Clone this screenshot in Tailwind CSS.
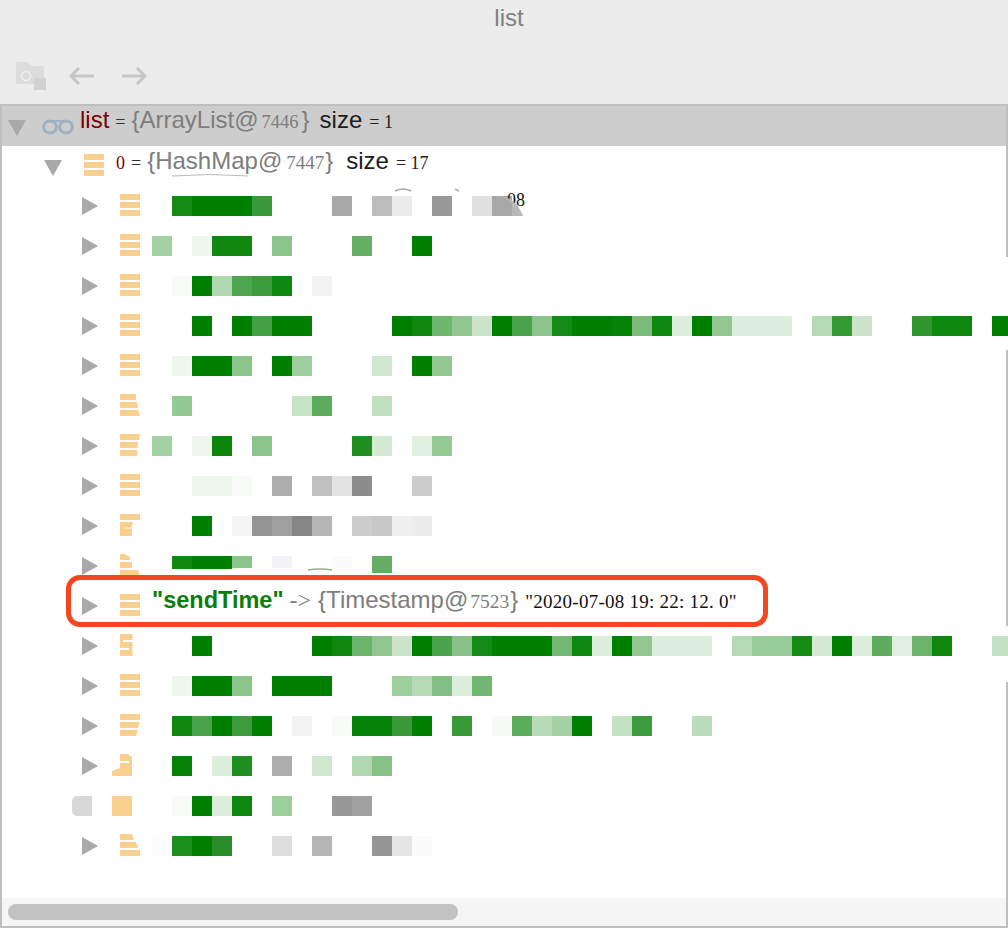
<!DOCTYPE html>
<html>
<head>
<meta charset="utf-8">
<title>list</title>
<script src="https://cdn.jsdelivr.net/npm/@tailwindcss/browser@4"></script>
</head>
<body class="bg-[#ececec]">
<div class="relative w-[1008px] h-[928px] overflow-hidden flex flex-col bg-[#ececec] font-['Liberation_Sans',sans-serif]">

    <!-- Titulo -->
    <div class="h-9 flex items-center justify-center pl-[10px] text-[24px] text-[#808080]">list</div>

    <!-- Barra de herramientas -->
    <div class="h-[68px] pt-3 pl-4 flex items-center">
        <svg class="w-[30px] h-7" viewBox="0 0 30 28">
            <path d="M0 0H11L15 4H28V16H18V22H0Z" fill="#dcdcdc"/>
            <circle cx="10" cy="14" r="4.5" fill="none" stroke="#f0f0f0" stroke-width="1.5"/>
            <rect x="18" y="16" width="12" height="12" fill="#d2d2d2"/>
        </svg>
        <svg class="ml-[22px] w-[26px] h-5" viewBox="0 0 26 20" fill="none" stroke="#c6c6c6" stroke-width="3">
            <path d="M26 10H3M11 2L3 10L11 18"/>
        </svg>
        <svg class="ml-7 w-[26px] h-5" viewBox="0 0 26 20" fill="none" stroke="#c6c6c6" stroke-width="3">
            <path d="M0 10H23M15 2L23 10L15 18"/>
        </svg>
    </div>

    <!-- Arbol de variables -->
    <div class="flex-1 flex flex-col border-l-2 border-t-2 border-b-2 border-[#bfbfbf] bg-white">
        <div class="flex-1 flex flex-col">

            <!-- list -->
            <div class="h-10 shrink-0 flex items-center bg-[#cdcdcd] pl-[6px]">
                <svg class="w-[18px] h-5" viewBox="0 0 18 20"><path d="M0 4H18L9 20Z" fill="#a9a9a9"/></svg>
                <svg class="ml-4 w-8 h-5" viewBox="0 0 32 20" fill="none" stroke="#9fb0c0" stroke-width="3">
                    <ellipse cx="8" cy="11" rx="6.500" ry="6"/><ellipse cx="24" cy="11" rx="6.500" ry="6"/><path d="M8 5H24" stroke-width="2"/>
                </svg>
                <div class="ml-[6px] pb-[10px] flex items-baseline whitespace-nowrap text-[24px] leading-7 text-[#7d7d7d]">
                    <span class="text-[#7a0000]">list</span>
                    <span class="ml-[6px] mr-[6px] text-[18px] font-['Liberation_Serif',serif] text-[#333]">=</span>
                    <span>{ArrayList@</span><span class="text-[18.500px] font-['Liberation_Serif',serif] mx-[3px]">7446</span><span>}</span>
                    <span class="ml-[10px] text-[#1c1c1c]">size</span>
                    <span class="ml-[7px] text-[18px] font-['Liberation_Serif',serif] text-[#222]">= 1</span>
                </div>
            </div>

            <!-- 0 -->
            <div class="h-10 shrink-0 flex items-center pl-[42px]">
                <svg class="w-[18px] h-5" viewBox="0 0 18 20"><path d="M0 4H18L9 20Z" fill="#a9a9a9"/></svg>
                <svg class="ml-[22px] w-5 h-6" viewBox="0 0 20 24" fill="#fad08e"><rect width="20" height="6"/><rect y="8" width="20" height="6"/><rect y="16" width="20" height="6"/></svg>
                <div class="ml-3 pb-[8px] flex items-baseline whitespace-nowrap text-[24px] leading-7 text-[#7d7d7d]">
                    <span class="text-[18px] font-['Liberation_Serif',serif] text-[#7a0000]">0</span>
                    <span class="ml-[6px] mr-[6px] text-[18px] font-['Liberation_Serif',serif] text-[#333]">=</span>
                    <span>{HashMap@</span><span class="text-[19px] font-['Liberation_Serif',serif] ml-[4px] mr-[1px]">7447</span><span>}</span>
                    <span class="ml-[13px] text-[#1c1c1c]">size</span>
                    <span class="ml-[7px] text-[18px] font-['Liberation_Serif',serif] text-[#222]">= 17</span>
                </div>
            </div>

            <!-- fila 1 -->
            <div class="h-10 shrink-0 flex items-center pl-[80px]">
                <svg class="w-4 h-5" viewBox="0 0 16 20"><path d="M0 1L16 10L0 19Z" fill="#a9a9a9"/></svg>
                <svg class="ml-[22px] w-5 h-6" viewBox="0 0 20 24" fill="#fad08e"><rect width="20" height="6"/><rect y="8" width="20" height="6"/><rect y="16" width="20" height="6"/></svg>
                <div class="ml-3 flex items-center">
                    <i class="size-5 ml-5 bg-[#148a14]"></i><i class="w-15 h-5 bg-[#008000]"></i><i class="size-5 bg-[#389a38]"></i>
                    <i class="size-5 ml-15 bg-[#a9a9a9]"></i>
                    <i class="size-5 ml-5 bg-[#bcbcbc]"></i><i class="size-5 bg-[#ececec]"></i>
                    <i class="size-5 ml-5 bg-[#999999]"></i>
                    <i class="size-5 ml-5 bg-[#e0e0e0]"></i><i class="size-5 bg-[#a8a8a8]"></i>
                    <span class="-ml-[5px] -mt-[12px] text-[18px] leading-5 font-['Liberation_Serif',serif] text-[#111]">08</span>
                </div>
            </div>

            <!-- fila 2 -->
            <div class="h-10 shrink-0 flex items-center pl-[80px]">
                <svg class="w-4 h-5" viewBox="0 0 16 20"><path d="M0 1L16 10L0 19Z" fill="#a9a9a9"/></svg>
                <svg class="ml-[22px] w-5 h-6" viewBox="0 0 20 24" fill="#fad08e"><rect width="20" height="6"/><rect y="8" width="20" height="6"/><rect y="16" width="20" height="6"/></svg>
                <div class="ml-3 flex items-center">
                    <i class="size-5 bg-[#a3d1a3]"></i>
                    <i class="size-5 ml-5 bg-[#eef6ee]"></i><i class="w-10 h-5 bg-[#108810]"></i>
                    <i class="size-5 ml-5 bg-[#8cc58c]"></i>
                    <i class="size-5 ml-15 bg-[#66b066]"></i>
                    <i class="size-5 ml-10 bg-[#008000]"></i>
                </div>
            </div>

            <!-- fila 3 -->
            <div class="h-10 shrink-0 flex items-center pl-[80px]">
                <svg class="w-4 h-5" viewBox="0 0 16 20"><path d="M0 1L16 10L0 19Z" fill="#a9a9a9"/></svg>
                <svg class="ml-[22px] w-5 h-6" viewBox="0 0 20 24" fill="#fad08e"><rect width="20" height="6"/><rect y="8" width="20" height="6"/><rect y="16" width="20" height="6"/></svg>
                <div class="ml-3 flex items-center">
                    <i class="size-5 ml-5 bg-[#f9fbf9]"></i><i class="size-5 bg-[#008000]"></i><i class="size-5 bg-[#b0d8b0]"></i><i class="size-5 bg-[#4fa54f]"></i><i class="size-5 bg-[#3c9b3c]"></i><i class="size-5 bg-[#0f880f]"></i>
                    <i class="size-5 ml-5 bg-[#f3f3f3]"></i>
                </div>
            </div>

            <!-- fila 4 -->
            <div class="h-10 shrink-0 flex items-center pl-[80px]">
                <svg class="w-4 h-5 shrink-0" viewBox="0 0 16 20"><path d="M0 1L16 10L0 19Z" fill="#a9a9a9"/></svg>
                <svg class="ml-[22px] w-5 h-6 shrink-0" viewBox="0 0 20 24" fill="#fad08e"><rect width="20" height="6"/><rect y="8" width="20" height="6"/><rect y="16" width="20" height="6"/></svg>
                <div class="ml-3 shrink-0 flex items-center">
                    <i class="size-5 ml-10 bg-[#008000]"></i>
                    <i class="size-5 ml-5 bg-[#008000]"></i><i class="size-5 bg-[#439f43]"></i><i class="w-10 h-5 bg-[#008000]"></i>
                    <i class="size-5 ml-20 bg-[#008000]"></i><i class="size-5 bg-[#108810]"></i><i class="size-5 bg-[#6fb66f]"></i><i class="size-5 bg-[#90c690]"></i><i class="size-5 bg-[#cbe4cb]"></i><i class="size-5 bg-[#008000]"></i><i class="size-5 bg-[#4ba34b]"></i><i class="size-5 bg-[#8cc48c]"></i><i class="size-5 bg-[#138a13]"></i><i class="w-10 h-5 bg-[#008000]"></i><i class="size-5 bg-[#068206]"></i><i class="size-5 bg-[#7aba7a]"></i><i class="size-5 bg-[#0e870e]"></i><i class="size-5 bg-[#dcedDC]"></i><i class="size-5 bg-[#008000]"></i><i class="size-5 bg-[#92c792]"></i><i class="w-15 h-5 bg-[#deeede]"></i>
                    <i class="size-5 ml-5 bg-[#b5dab5]"></i><i class="size-5 bg-[#339933]"></i><i class="size-5 bg-[#cbe4cb]"></i><i class="w-10 h-5 bg-[#fdfefd]"></i><i class="size-5 bg-[#2d962d]"></i><i class="w-10 h-5 bg-[#0e870e]"></i>
                    <i class="w-4 h-5 ml-5 bg-[#008000]"></i>
                </div>
            </div>

            <!-- fila 5 -->
            <div class="h-10 shrink-0 flex items-center pl-[80px]">
                <svg class="w-4 h-5" viewBox="0 0 16 20"><path d="M0 1L16 10L0 19Z" fill="#a9a9a9"/></svg>
                <svg class="ml-[22px] w-5 h-6" viewBox="0 0 20 24" fill="#fad08e"><rect width="20" height="6"/><rect y="8" width="20" height="6"/><rect y="16" width="20" height="6"/></svg>
                <div class="ml-3 flex items-center">
                    <i class="size-5 ml-5 bg-[#eef6ee]"></i><i class="w-10 h-5 bg-[#008000]"></i><i class="size-5 bg-[#8cc58c]"></i>
                    <i class="size-5 ml-5 bg-[#008000]"></i><i class="size-5 bg-[#9dce9d]"></i>
                    <i class="size-5 ml-15 bg-[#cfe7cf]"></i>
                    <i class="size-5 ml-5 bg-[#008000]"></i><i class="size-5 bg-[#92c792]"></i>
                </div>
            </div>

            <!-- fila 6 -->
            <div class="h-10 shrink-0 flex items-center pl-[80px]">
                <svg class="w-4 h-5" viewBox="0 0 16 20"><path d="M0 1L16 10L0 19Z" fill="#a9a9a9"/></svg>
                <svg class="ml-[22px] w-5 h-6" viewBox="0 0 20 24" fill="#fad08e"><rect width="16" height="6"/><path d="M0 8H17L18 14H0Z"/><path d="M0 16H18L20 22H0Z"/></svg>
                <div class="ml-3 flex items-center">
                    <i class="size-5 ml-5 bg-[#93c993]"></i>
                    <i class="size-5 ml-25 bg-[#c8e4c8]"></i><i class="size-5 bg-[#5bac5b]"></i>
                    <i class="size-5 ml-10 bg-[#bfdfbf]"></i>
                </div>
            </div>

            <!-- fila 7 -->
            <div class="h-10 shrink-0 flex items-center pl-[80px]">
                <svg class="w-4 h-5" viewBox="0 0 16 20"><path d="M0 1L16 10L0 19Z" fill="#a9a9a9"/></svg>
                <svg class="ml-[22px] w-5 h-6" viewBox="0 0 20 24" fill="#fad08e"><path d="M0 0H20L19 6H0Z"/><path d="M0 8H18L17.500 14H0Z"/><path d="M0 16H17.500L17 22H0Z"/></svg>
                <div class="ml-3 flex items-center">
                    <i class="size-5 bg-[#a3d1a3]"></i>
                    <i class="size-5 ml-5 bg-[#eef6ee]"></i><i class="size-5 bg-[#0a850a]"></i>
                    <i class="size-5 ml-5 bg-[#8cc58c]"></i>
                    <i class="size-5 ml-20 bg-[#1f8f1f]"></i><i class="size-5 bg-[#d5ead5]"></i>
                    <i class="size-5 ml-5 bg-[#e2f0e2]"></i><i class="size-5 bg-[#95ca95]"></i>
                </div>
            </div>

            <!-- fila 8 -->
            <div class="h-10 shrink-0 flex items-center pl-[80px]">
                <svg class="w-4 h-5" viewBox="0 0 16 20"><path d="M0 1L16 10L0 19Z" fill="#a9a9a9"/></svg>
                <svg class="ml-[22px] w-5 h-6" viewBox="0 0 20 24" fill="#fad08e"><rect width="20" height="6"/><rect y="8" width="20" height="6"/><rect y="16" width="20" height="6"/></svg>
                <div class="ml-3 flex items-center">
                    <i class="w-10 h-5 ml-10 bg-[#eef6ee]"></i><i class="size-5 bg-[#f9fbf9]"></i>
                    <i class="size-5 ml-5 bg-[#adadad]"></i>
                    <i class="size-5 ml-5 bg-[#c0c0c0]"></i><i class="size-5 bg-[#e3e3e3]"></i><i class="size-5 bg-[#8d8d8d]"></i>
                    <i class="size-5 ml-10 bg-[#cdcdcd]"></i>
                </div>
            </div>

            <!-- fila 9 -->
            <div class="h-10 shrink-0 flex items-center pl-[80px]">
                <svg class="w-4 h-5" viewBox="0 0 16 20"><path d="M0 1L16 10L0 19Z" fill="#a9a9a9"/></svg>
                <svg class="ml-[22px] w-5 h-6" viewBox="0 0 20 24" fill="#fad08e"><rect width="20" height="6"/><path d="M0 8H13V10H12V22H0Z"/><rect x="5" y="13" width="7" height="2" fill="#fbe3bd"/></svg>
                <div class="ml-3 flex items-center">
                    <i class="size-5 ml-10 bg-[#008000]"></i>
                    <i class="size-5 ml-5 bg-[#f5f5f5]"></i><i class="size-5 bg-[#949494]"></i><i class="size-5 bg-[#9f9f9f]"></i><i class="size-5 bg-[#858585]"></i><i class="size-5 bg-[#b5b5b5]"></i>
                    <i class="size-5 ml-5 bg-[#cdcdcd]"></i><i class="size-5 bg-[#c8c8c8]"></i><i class="size-5 bg-[#f0f0f0]"></i><i class="size-5 bg-[#ececec]"></i>
                </div>
            </div>

            <!-- fila 10 -->
            <div class="h-10 shrink-0 flex items-center pl-[80px]">
                <svg class="w-4 h-5" viewBox="0 0 16 20"><path d="M0 1L16 10L0 19Z" fill="#a9a9a9"/></svg>
                <svg class="ml-[22px] w-5 h-6" viewBox="0 0 20 24" fill="#fad08e"><path d="M0 0H4L10 3V6H0Z"/><path d="M0 8H12V14H0Z"/><path d="M0 16H18L20 22H0Z"/></svg>
                <div class="ml-3 h-5 flex items-start">
                    <i class="w-[20px] h-[13px] ml-5 bg-[#118911]"></i><i class="w-10 h-[13px] bg-[#008000]"></i><i class="w-5 h-[12px] bg-[#8cc58c]"></i>
                    <i class="w-5 h-[12px] ml-5 bg-[#f3f3f7]"></i>
                    <i class="w-5 h-[12px] ml-10 bg-[#fbfcfa]"></i>
                    <i class="w-5 h-[17px] ml-5 bg-[#63ae63]"></i>
                </div>
            </div>

            <!-- sendTime -->
            <div class="relative h-10 shrink-0 flex items-center pl-[80px]">
                <div class="absolute left-[64px] -top-[11px] -bottom-[1px] w-[702px] border-[5px] border-[#f4461f] rounded-[14px]"></div>
                <svg class="w-4 h-5" viewBox="0 0 16 20"><path d="M0 1L16 10L0 19Z" fill="#a9a9a9"/></svg>
                <svg class="ml-[22px] w-5 h-6" viewBox="0 0 20 24" fill="#fad08e"><rect width="20" height="6"/><rect y="8" width="20" height="6"/><rect y="16" width="20" height="6"/></svg>
                <div class="ml-3 pb-[10px] flex items-baseline whitespace-nowrap text-[24px] leading-7 text-[#7d7d7d]">
                    <span class="font-bold text-[23.500px] text-[#0a7d0a]">"sendTime"</span>
                    <span class="ml-[6px] mr-[7px] text-[24px] leading-5 font-['Liberation_Serif',serif] font-light">-&gt;</span>
                    <span>{Timestamp@</span><span class="text-[19.500px] font-['Liberation_Serif',serif] ml-[2px] mr-[1px]">7523</span><span>}</span>
                    <span class="ml-[7px] text-[19px] tracking-[0.25px] font-['Liberation_Serif',serif] text-[#111]">"2020-07-08 19: 22: 12. 0"</span>
                </div>
            </div>

            <!-- fila 12 -->
            <div class="h-10 shrink-0 flex items-center pl-[80px]">
                <svg class="w-4 h-5 shrink-0" viewBox="0 0 16 20"><path d="M0 1L16 10L0 19Z" fill="#a9a9a9"/></svg>
                <svg class="ml-[22px] w-5 h-6 shrink-0" viewBox="0 0 20 24" fill="#fad08e"><rect width="12.500" height="22"/><rect x="3" y="6" width="10" height="2" fill="#ffffff"/><rect x="0" y="14" width="9" height="2" fill="#ffffff"/></svg>
                <div class="ml-3 shrink-0 flex items-center">
                    <i class="size-5 ml-10 bg-[#008000]"></i>
                    <i class="size-5 ml-25 bg-[#008000]"></i><i class="size-5 bg-[#0f870f]"></i><i class="size-5 bg-[#6cb46c]"></i><i class="size-5 bg-[#90c690]"></i><i class="size-5 bg-[#cbe4cb]"></i><i class="size-5 bg-[#008000]"></i><i class="size-5 bg-[#4ba34b]"></i><i class="size-5 bg-[#88c288]"></i><i class="size-5 bg-[#138a13]"></i><i class="w-15 h-5 bg-[#008000]"></i><i class="size-5 bg-[#72b872]"></i><i class="size-5 bg-[#0e870e]"></i><i class="size-5 bg-[#dcedDC]"></i><i class="size-5 bg-[#008000]"></i><i class="size-5 bg-[#92c792]"></i><i class="w-15 h-5 bg-[#deeede]"></i>
                    <i class="size-5 ml-5 bg-[#b5dab5]"></i><i class="w-10 h-5 bg-[#98cc98]"></i><i class="size-5 bg-[#138a13]"></i><i class="size-5 bg-[#d5ead5]"></i><i class="size-5 bg-[#008000]"></i><i class="size-5 bg-[#dcedDC]"></i><i class="size-5 bg-[#5fad5f]"></i><i class="size-5 bg-[#e0efe0]"></i><i class="size-5 bg-[#6cb46c]"></i><i class="size-5 bg-[#0e870e]"></i>
                    <i class="w-4 h-5 ml-10 bg-[#c5e2c5]"></i>
                </div>
            </div>

            <!-- fila 13 -->
            <div class="h-10 shrink-0 flex items-center pl-[80px]">
                <svg class="w-4 h-5" viewBox="0 0 16 20"><path d="M0 1L16 10L0 19Z" fill="#a9a9a9"/></svg>
                <svg class="ml-[22px] w-5 h-6" viewBox="0 0 20 24" fill="#fad08e"><rect width="20" height="6"/><rect y="8" width="20" height="6"/><rect y="16" width="20" height="6"/></svg>
                <div class="ml-3 flex items-center">
                    <i class="size-5 ml-5 bg-[#eef6ee]"></i><i class="w-10 h-5 bg-[#008000]"></i><i class="size-5 bg-[#8cc58c]"></i>
                    <i class="w-15 h-5 ml-5 bg-[#008000]"></i>
                    <i class="size-5 ml-15 bg-[#9dcf9d]"></i><i class="size-5 bg-[#b5dab5]"></i><i class="size-5 bg-[#82bf82]"></i><i class="size-5 bg-[#dcedDC]"></i><i class="size-5 bg-[#71b771]"></i>
                </div>
            </div>

            <!-- fila 14 -->
            <div class="h-10 shrink-0 flex items-center pl-[80px]">
                <svg class="w-4 h-5" viewBox="0 0 16 20"><path d="M0 1L16 10L0 19Z" fill="#a9a9a9"/></svg>
                <svg class="ml-[22px] w-5 h-6" viewBox="0 0 20 24" fill="#fad08e"><rect width="20" height="6"/><path d="M0 8H20L18 14H0Z"/><path d="M0 16H18L16 22H0Z"/></svg>
                <div class="ml-3 flex items-center">
                    <i class="size-5 ml-5 bg-[#108810]"></i><i class="size-5 bg-[#4aa24a]"></i><i class="size-5 bg-[#008000]"></i><i class="size-5 bg-[#3c9b3c]"></i><i class="size-5 bg-[#008000]"></i>
                    <i class="size-5 ml-5 bg-[#f3f3f3]"></i>
                    <i class="size-5 ml-5 bg-[#f9fbf9]"></i><i class="w-10 h-5 bg-[#068206]"></i><i class="size-5 bg-[#3a9a3a]"></i><i class="size-5 bg-[#008000]"></i>
                    <i class="size-5 ml-5 bg-[#3a9a3a]"></i>
                    <i class="size-5 ml-5 bg-[#f6f9f6]"></i><i class="size-5 bg-[#5bac5b]"></i><i class="size-5 bg-[#b8dcb8]"></i><i class="size-5 bg-[#a3d1a3]"></i><i class="size-5 bg-[#008000]"></i>
                    <i class="size-5 ml-5 bg-[#c5e2c5]"></i><i class="size-5 bg-[#3d9c3d]"></i>
                    <i class="size-5 ml-10 bg-[#bcddbc]"></i>
                </div>
            </div>

            <!-- fila 15 -->
            <div class="h-10 shrink-0 flex items-center pl-[80px]">
                <svg class="w-4 h-5" viewBox="0 0 16 20"><path d="M0 1L16 10L0 19Z" fill="#a9a9a9"/></svg>
                <svg class="ml-[22px] w-5 h-6 overflow-visible" viewBox="0 0 20 24" fill="#fad08e"><path d="M0 0H8L12 3V22H-8V17L0 14Z"/><rect x="0" y="7" width="9" height="2" fill="#ffffff"/></svg>
                <div class="ml-3 flex items-center">
                    <i class="size-5 ml-5 bg-[#068206]"></i>
                    <i class="size-5 ml-5 bg-[#dcedDC]"></i><i class="size-5 bg-[#1f8f1f]"></i>
                    <i class="size-5 ml-5 bg-[#adadad]"></i>
                    <i class="size-5 ml-5 bg-[#cfe7cf]"></i>
                    <i class="size-5 ml-5 bg-[#b0d8b0]"></i><i class="size-5 bg-[#88c288]"></i>
                </div>
            </div>

            <!-- fila 16 -->
            <div class="h-10 shrink-0 flex items-center pl-[70px]">
                <i class="w-5 h-5 rounded-l-[5px] bg-[#d8d8d8]"></i>
                <i class="ml-5 w-5 h-5 bg-[#fad08e]"></i>
                <div class="ml-5 flex items-center">
                    <i class="size-5 ml-5 bg-[#f9fbf9]"></i><i class="size-5 bg-[#008000]"></i><i class="size-5 bg-[#dcedDC]"></i><i class="size-5 bg-[#0e870e]"></i>
                    <i class="size-5 ml-5 bg-[#9dcf9d]"></i>
                    <i class="size-5 ml-10 bg-[#989898]"></i><i class="size-5 bg-[#a0a0a0]"></i>
                </div>
            </div>

            <!-- fila 17 -->
            <div class="h-10 shrink-0 flex items-center pl-[80px]">
                <svg class="w-4 h-5" viewBox="0 0 16 20"><path d="M0 1L16 10L0 19Z" fill="#a9a9a9"/></svg>
                <svg class="ml-[22px] w-5 h-6" viewBox="0 0 20 24" fill="#fad08e"><path d="M0 0H12L14 6H0Z"/><path d="M0 8H16L18 14H0Z"/><path d="M0 16H20V22H0Z"/></svg>
                <div class="ml-3 flex items-center">
                    <i class="size-5 bg-[#fbfcfb]"></i><i class="size-5 bg-[#1c8e1c]"></i><i class="size-5 bg-[#008000]"></i><i class="size-5 bg-[#288f28]"></i>
                    <i class="size-5 ml-10 bg-[#dedede]"></i>
                    <i class="size-5 ml-5 bg-[#b5b5b5]"></i>
                    <i class="size-5 ml-10 bg-[#959595]"></i><i class="size-5 bg-[#e5e5e5]"></i><i class="size-5 bg-[#fbfbfb]"></i>
                </div>
            </div>
        </div>

        <!-- Barra de scroll -->
        <div class="h-7 shrink-0 flex items-center pl-[6px] pr-[2px] bg-[#f5f5f5]">
            <div class="w-[450px] h-4 rounded-full bg-[#c2c2c2]"></div>
        </div>
    </div>

    <!-- Borde derecho, tapado en parte por el pixelado -->
    <div class="absolute right-0 top-[105px] w-[2px] h-[152px] bg-[#bfbfbf]"></div>
    <div class="absolute right-0 top-[350px] w-[2px] h-[276px] bg-[#bfbfbf]"></div>
    <div class="absolute right-0 top-[682px] w-[2px] h-[246px] bg-[#bfbfbf]"></div>

    <!-- Restos del pixelado encima del contenido -->
    <svg class="absolute left-0 top-0 w-[1008px] h-[928px] pointer-events-none" viewBox="0 0 1008 928" fill="none">
        <path d="M172 176Q210 173 248 176" stroke="#bbbbbb" stroke-width="1"/>
        <path d="M395 191Q403 187 411 191M455 189L459 191" stroke="#aaaaaa" stroke-width="1.500"/>
        <path d="M492 216V196H501Q516 198 523 216Z" fill="#b8b8b8"/>
        <path d="M492 216V196H501Q508 198 512 204V216Z" fill="#a8a8a8"/>
        <path d="M308 570Q320 568 332 570" stroke="#7fb97f" stroke-width="1.500"/>
    </svg>
</div>
</body>
</html>
